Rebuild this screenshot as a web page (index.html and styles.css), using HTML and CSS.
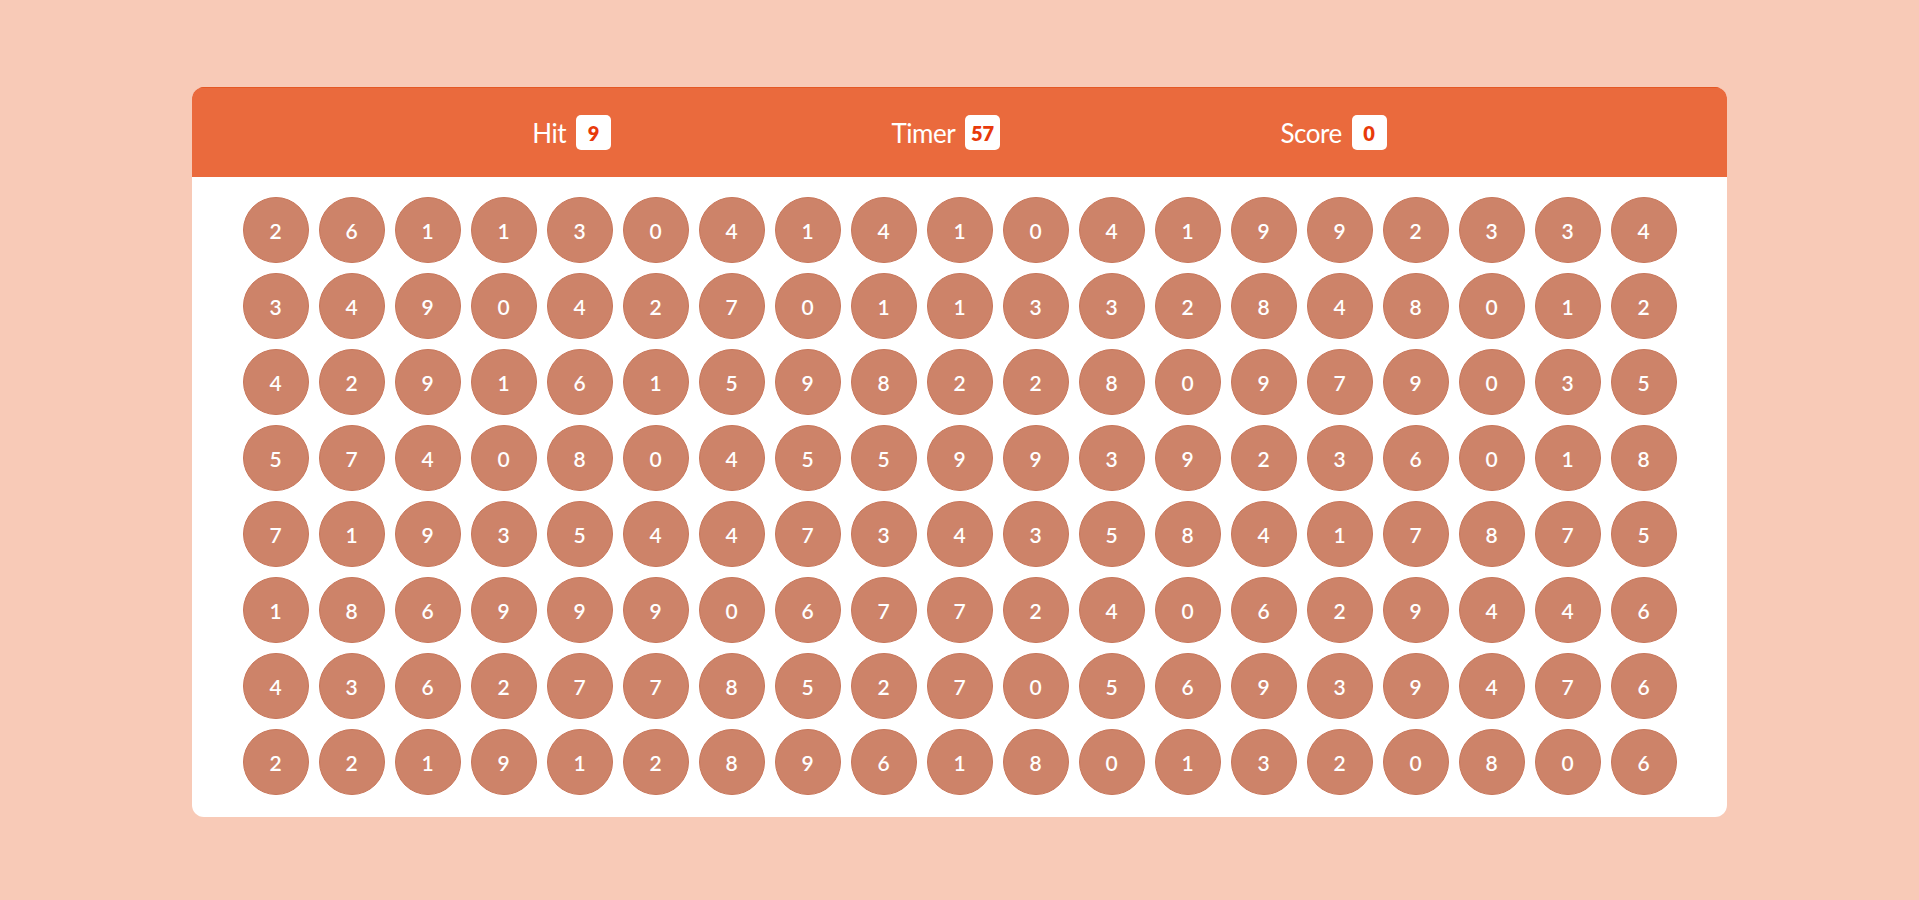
FILE: index.html
```html
<!DOCTYPE html>
<html>
    <head>
        <title> Bubble Hit </title>
        <link rel="stylesheet" href="styles.css">
    </head>

    <body>
        <div class = "panel">
            <div class = "top_bar">
                <div class = "stat">
                    <span class = "stat_label">Hit</span>
                    <span class = "stat_box" id = "hit_val">9</span>
                </div>
                <div class = "stat">
                    <span class = "stat_label">Timer</span>
                    <span class = "stat_box" id = "timer_val">57</span>
                </div>
                <div class = "stat">
                    <span class = "stat_label">Score</span>
                    <span class = "stat_box" id = "score_val">0</span>
                </div>
            </div>
            <div class = "bubbles" id = "bubbles"></div>
        </div>

        <script>
            // same board as the screenshot, one string per row
            var rows = [
                "2611304141041992334",
                "3490427011332848012",
                "4291615982280979035",
                "5740804559939236018",
                "7193544734358417875",
                "1869990677240629446",
                "4362778527056939476",
                "2219128961801320806"
            ];
            var board = document.getElementById("bubbles");
            var html = "";
            for (var r = 0; r < rows.length; r++) {
                for (var c = 0; c < rows[r].length; c++) {
                    html += '<div class = "bubble">' + rows[r][c] + '</div>';
                }
            }
            board.innerHTML = html;
        </script>
    </body>
</html>
```

FILE: styles.css
```css
body {
    margin: 0;
    background-color: rgb(248, 202, 183);
    font-family: 'Lato', 'Open Sans', sans-serif;
}

.panel {
    width: 80%;
    margin: 87px auto 0 auto;
    background-color: white;
    border-radius: 12px;
    overflow: hidden;
}

.top_bar {
    height: 89px;
    background-color: rgb(234, 106, 61);
    border-top: 1px solid rgb(228, 88, 36);
    display: flex;
    flex-direction: row;
    justify-content: space-evenly;
    align-items: center;
    padding: 0 60px;
}

.stat {
    display: flex;
    flex-direction: row;
    align-items: center;
    gap: 10px;
}

.stat_label {
    color: white;
    font-size: 26px;
    letter-spacing: -0.5px;
}

.stat_box {
    min-width: 35px;
    height: 35px;
    padding: 0 3px;
    box-sizing: border-box;
    background-color: white;
    border-radius: 5px;
    color: rgb(232, 58, 10);
    font-size: 20px;
    font-weight: 800;
    display: flex;
    justify-content: center;
    align-items: center;
}

.bubbles {
    display: grid;
    grid-template-columns: repeat(19, 66px); /* 19 bubbles per row */
    justify-content: center;
    gap: 10px;
    padding: 20px 0 22px 0;
}

.bubble {
    height: 66px;
    box-sizing: border-box;
    border: 1px solid rgb(200, 118, 90);
    border-radius: 100px; /* full circle */
    background-color: rgb(205, 131, 105);
    color: white;
    font-size: 21px;
    font-weight: 600;
    display: flex;
    justify-content: center;
    align-items: center;
}
```
